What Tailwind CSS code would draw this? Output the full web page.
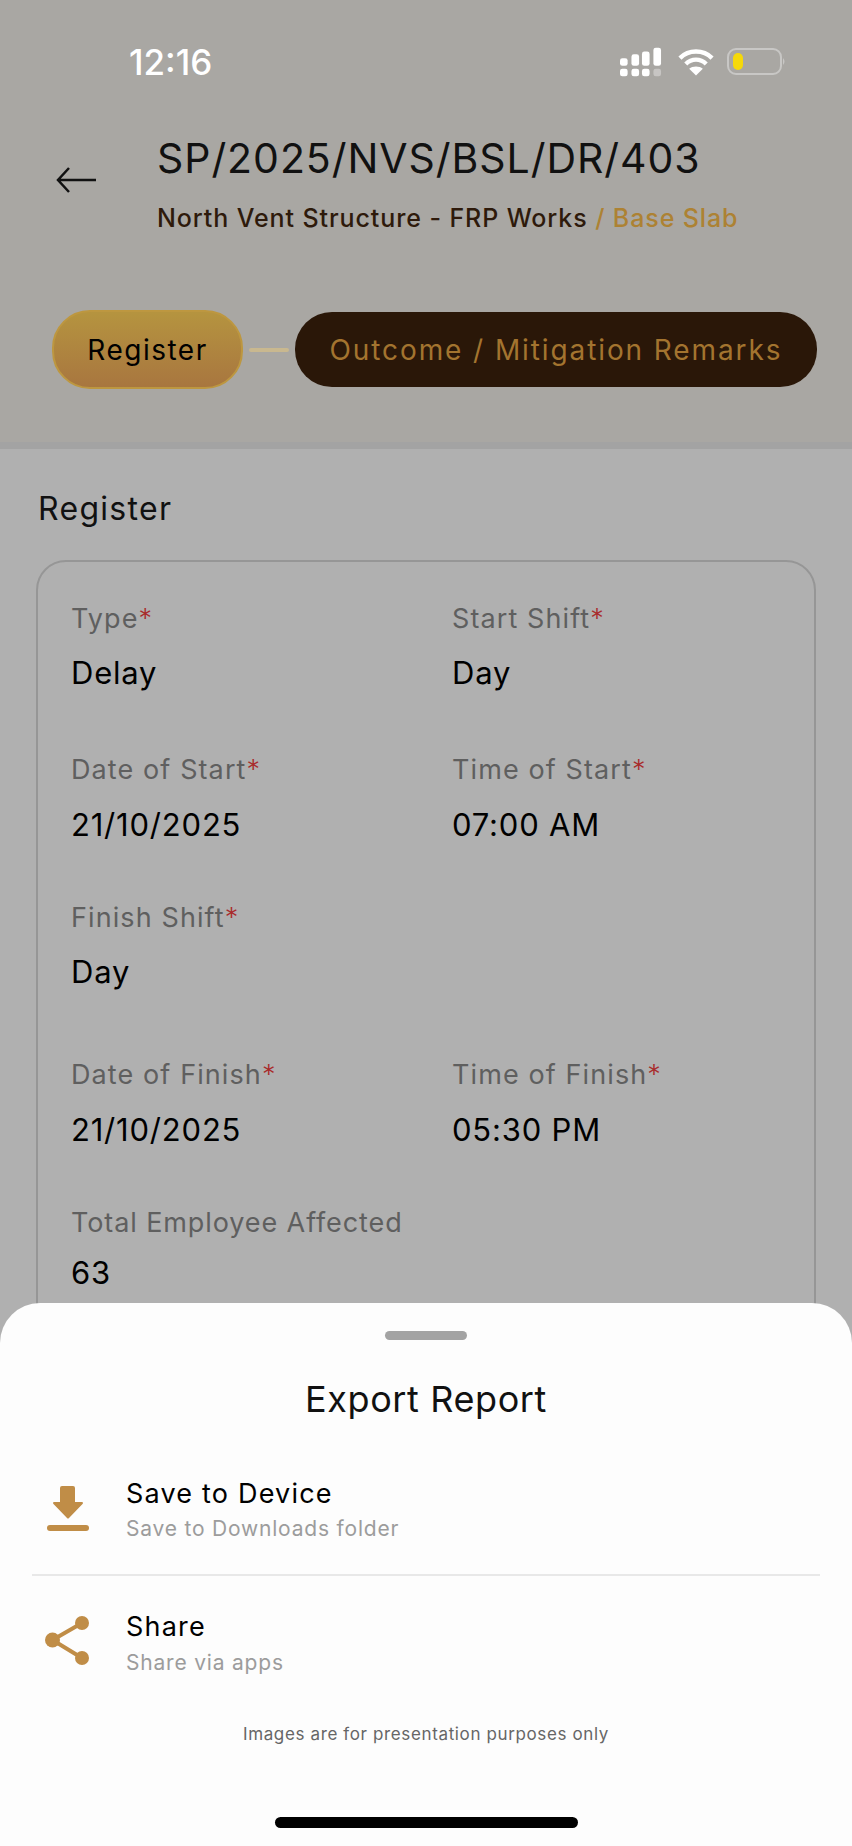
<!DOCTYPE html>
<html lang="en">

<head>
  <meta charset="UTF-8" />
  <title>Export Report</title>
  <script src="https://cdn.jsdelivr.net/npm/@tailwindcss/browser@4"></script>
</head>

<body class="relative w-[852px] h-[1846px] overflow-hidden bg-[#b0b0b0] font-['Inter',sans-serif] text-black">
  <!-- header -->
  <header class="h-[449px] bg-[#a9a7a3] border-b-[7px] border-[#a3a3a3]">
    <div class="flex items-center justify-between h-[124px] pl-[129px] pr-[65px]">
      <span class="text-[35px] font-medium text-white">12:16</span>
      <div class="flex items-center gap-[8px]">
        <svg width="42" height="30" viewBox="0 0 44 30" fill="#fff">
          <rect x="0" y="11" width="8" height="8" rx="2.5" />
          <rect x="12" y="7" width="8" height="12" rx="2.5" />
          <rect x="23" y="4" width="8" height="15" rx="2.5" />
          <rect x="35" y="0" width="8" height="19" rx="2.5" />
          <rect x="0" y="22" width="8" height="8" rx="2.5" />
          <rect x="12" y="22" width="8" height="8" rx="2.5" />
          <rect x="23" y="22" width="8" height="8" rx="2.5" />
          <rect x="35" y="22" width="8" height="8" rx="2.5" fill="#fff" fill-opacity="0.35" />
        </svg>
        <svg width="36" height="28" viewBox="0 0 37 28" fill="none" stroke="#fff" stroke-width="4.5" class="ml-[8px]">
          <path d="M2 10 C11 1 26 1 35 10" />
          <path d="M8 16 C14 10 23 10 29 16" />
          <path d="M18.5 28 L11.5 21 C15 18 22 18 25.5 21 Z" fill="#fff" stroke="none" />
        </svg>
        <svg width="60" height="28" viewBox="0 0 60 28" fill="none" class="ml-[5px]">
          <rect x="1" y="1" width="53" height="25" rx="8" stroke="#c8c7c5" stroke-width="2" />
          <rect x="6" y="5" width="10" height="17" rx="5" fill="#f5d90a" />
          <path d="M56 10 Q59 13.500 56 17 Z" fill="#c8c7c5" />
        </svg>
      </div>
    </div>
    <div class="flex items-center pl-[56px] mt-[6px]">
      <svg width="41" height="28" viewBox="0 0 41 28" fill="none" stroke="#111" stroke-width="2.5" class="mt-[-6px]">
        <path d="M40 14 H2 M13 2 L2 14 L13 26" />
      </svg>
      <div class="ml-[60px]">
        <h1 class="text-[41px] leading-[56px] tracking-[0.95px] text-[#111]">SP/2025/NVS/BSL/DR/403</h1>
        <p class="mt-[14px] text-[25px] leading-[36px] font-medium text-[#2e1a0b] tracking-[0.9px]">North Vent Structure - FRP Works <span class="text-[#ad8233]">/ Base Slab</span></p>
      </div>
    </div>
    <div class="flex items-center gap-[6px] pl-[52px] mt-[74px]">
      <div class="flex items-center justify-center w-[191px] h-[79px] rounded-[38px] border-2 border-[#bd9740] bg-gradient-to-b from-[#b5943f] to-[#a8763f] text-[28px] tracking-[1.5px]">Register</div>
      <div class="w-[40px] h-[4px] rounded-full bg-[#c9b88f]"></div>
      <div class="flex items-center justify-center w-[522px] h-[75px] rounded-[37px] bg-[#2a1708] text-[28px] tracking-[1.9px] text-[#a3742f]">Outcome / Mitigation Remarks</div>
    </div>
  </header>

  <!-- register details -->
  <main class="px-[36px] pt-[40px]">
    <h2 class="ml-[2px] text-[32px] leading-[40px] tracking-[1.3px] text-[#111]">Register</h2>
    <div class="mt-[31px] h-[900px] rounded-[30px] border-2 border-[#969696] pt-[42px] pl-[33px]">
      <div class="grid grid-cols-[381px_1fr]">
        <div>
          <p class="text-[27px] leading-[30px] tracking-[1.1px] text-[#5f5f5f]">Type<span class="font-light text-[#a92b2b]">*</span></p>
          <p class="mt-[19px] text-[31px] leading-[40px] tracking-[0.8px]">Delay</p>
        </div>
        <div>
          <p class="text-[27px] leading-[30px] tracking-[1.1px] text-[#5f5f5f]">Start Shift<span class="font-light text-[#a92b2b]">*</span></p>
          <p class="mt-[19px] text-[31px] leading-[40px] tracking-[0.8px]">Day</p>
        </div>
      </div>
      <div class="grid grid-cols-[381px_1fr] mt-[62px]">
        <div>
          <p class="text-[27px] leading-[30px] tracking-[1.1px] text-[#5f5f5f]">Date of Start<span class="font-light text-[#a92b2b]">*</span></p>
          <p class="mt-[20px] text-[31px] leading-[40px] tracking-[0.8px]">21/10/2025</p>
        </div>
        <div>
          <p class="text-[27px] leading-[30px] tracking-[1.1px] text-[#5f5f5f]">Time of Start<span class="font-light text-[#a92b2b]">*</span></p>
          <p class="mt-[20px] text-[31px] leading-[40px] tracking-[0.8px]">07:00 AM</p>
        </div>
      </div>
      <div class="mt-[58px]">
        <p class="text-[27px] leading-[30px] tracking-[1.1px] text-[#5f5f5f]">Finish Shift<span class="font-light text-[#a92b2b]">*</span></p>
        <p class="mt-[19px] text-[31px] leading-[40px] tracking-[0.8px]">Day</p>
      </div>
      <div class="grid grid-cols-[381px_1fr] mt-[68px]">
        <div>
          <p class="text-[27px] leading-[30px] tracking-[1.1px] text-[#5f5f5f]">Date of Finish<span class="font-light text-[#a92b2b]">*</span></p>
          <p class="mt-[20px] text-[31px] leading-[40px] tracking-[0.8px]">21/10/2025</p>
        </div>
        <div>
          <p class="text-[27px] leading-[30px] tracking-[1.1px] text-[#5f5f5f]">Time of Finish<span class="font-light text-[#a92b2b]">*</span></p>
          <p class="mt-[20px] text-[31px] leading-[40px] tracking-[0.8px]">05:30 PM</p>
        </div>
      </div>
      <div class="mt-[58px]">
        <p class="text-[27px] leading-[30px] tracking-[0.9px] text-[#5f5f5f]">Total Employee Affected</p>
        <p class="mt-[15px] text-[31px] leading-[40px] tracking-[0.8px]">63</p>
      </div>
    </div>
  </main>

  <!-- bottom sheet -->
  <section class="absolute left-0 right-0 bottom-0 h-[543px] rounded-t-[40px] bg-[#fdfdfd]">
    <div class="mx-auto mt-[28px] w-[82px] h-[9px] rounded-full bg-[#a3a3a3]"></div>
    <h3 class="mt-[36px] text-center text-[36px] leading-[46px] tracking-[0.6px] text-[#111]">Export Report</h3>
    <div class="flex items-center h-[130px] mx-[32px] mt-[24px] border-b-2 border-[#e8e8e8]">
      <svg width="42" height="45" viewBox="0 0 42 45" fill="#c08d47" class="ml-[15px] mb-[4px]">
        <path d="M15 0 H26 Q28 0 28 2 V16 H34.500 Q37 16 35.500 18 L22 32 Q21 33 20 32 L6.500 18 Q5 16 7.500 16 H13 V2 Q13 0 15 0 Z" />
        <rect x="0" y="39" width="42" height="6" rx="3" />
      </svg>
      <div class="ml-[37px]">
        <p class="text-[27px] leading-[36px] tracking-[1.2px]">Save to Device</p>
        <p class="mt-[1px] text-[21px] leading-[32px] tracking-[0.8px] text-[#9c9c9c]">Save to Downloads folder</p>
      </div>
    </div>
    <div class="flex items-center h-[112px] mx-[32px] mt-[12px]">
      <svg width="45" height="49" viewBox="0 0 45 49" fill="#c08d47" class="ml-[13px] mb-[8px]">
        <path d="M7.500 24 L37 7 M7.500 24 L37 42" stroke="#c08d47" stroke-width="4" />
        <circle cx="37" cy="7" r="7" />
        <circle cx="7.500" cy="24" r="7.500" />
        <circle cx="37" cy="42" r="7" />
      </svg>
      <div class="ml-[36px]">
        <p class="text-[27px] leading-[36px] tracking-[1.2px]">Share</p>
        <p class="mt-[2px] text-[21px] leading-[32px] tracking-[0.8px] text-[#9c9c9c]">Share via apps</p>
      </div>
    </div>
    <p class="mt-[22px] text-center text-[17px] leading-[24px] tracking-[0.63px] text-[#666]">Images are for presentation purposes only</p>
    <div class="absolute left-[275px] bottom-[18px] w-[303px] h-[11px] rounded-full bg-black"></div>
  </section>
</body>

</html>
